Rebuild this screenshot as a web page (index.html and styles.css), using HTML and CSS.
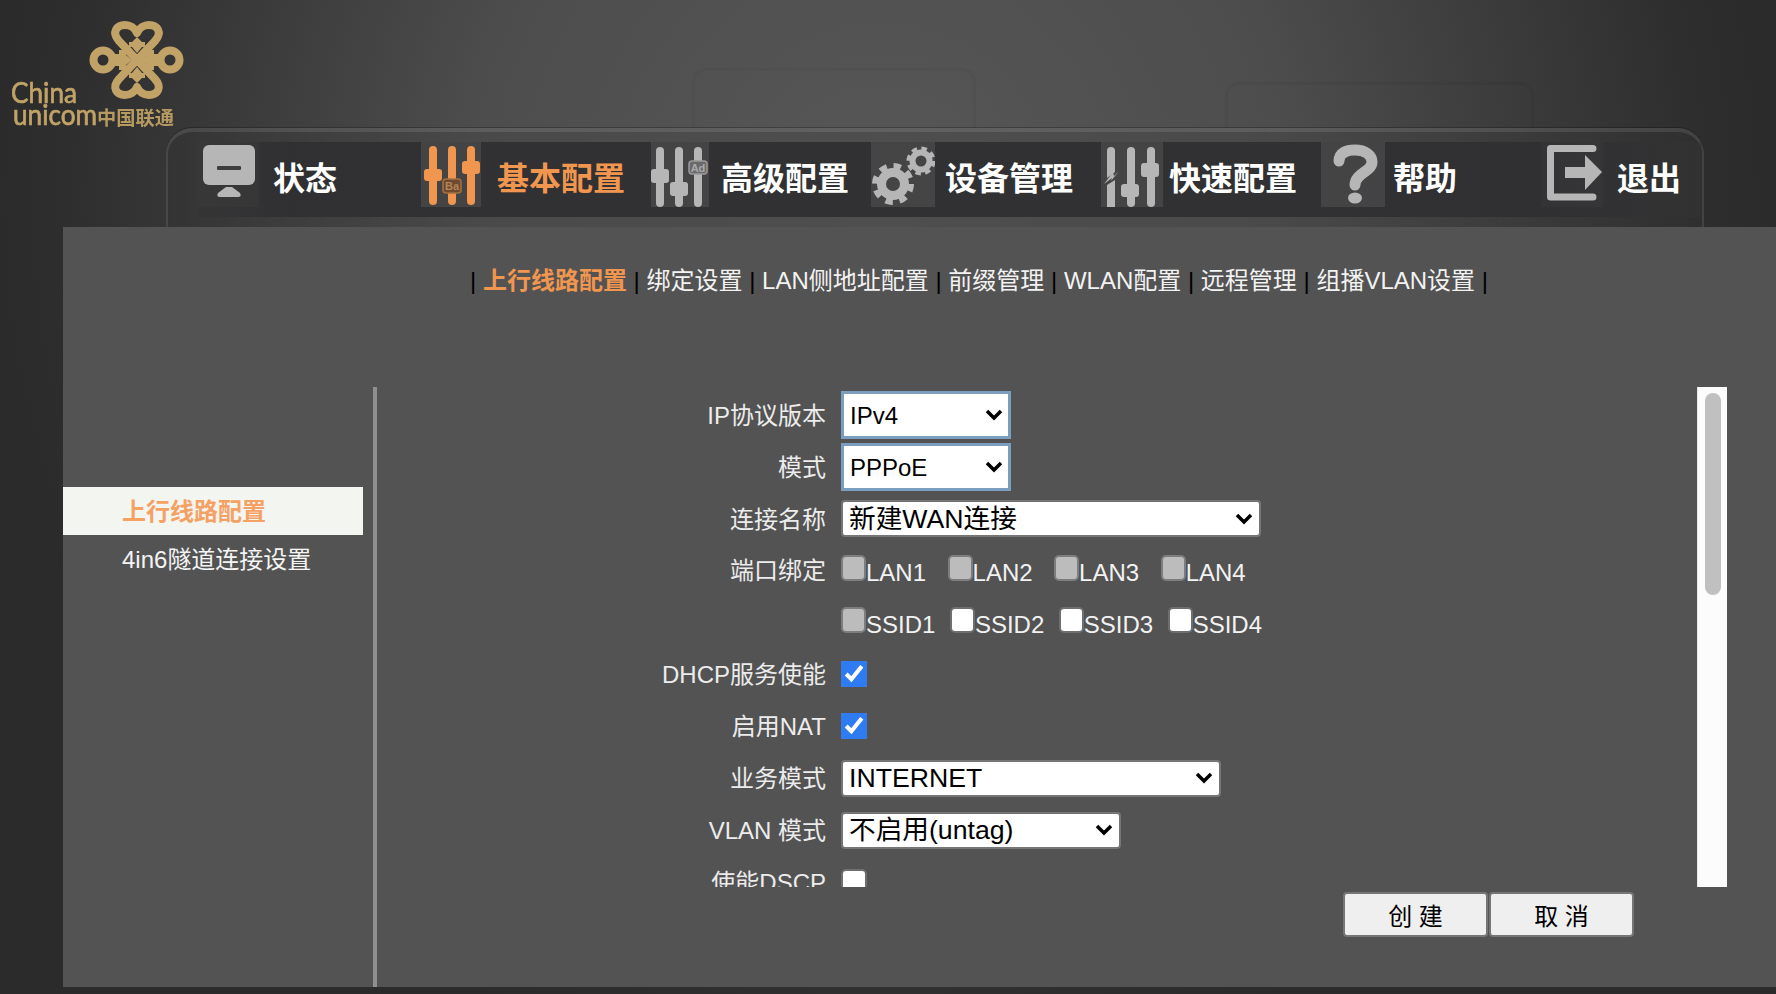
FILE: index.html
```html
<!DOCTYPE html>
<html lang="zh">
<head>
<meta charset="utf-8">
<title>China Unicom</title>
<link rel="stylesheet" href="styles.css">
</head>
<body>
<div class="ghost ghost-a"></div>
<div class="ghost ghost-b"></div>
<header class="brand">
  <svg class="logo" width="190" height="129" viewBox="0 0 190 129">
    <g class="knot">
      <path d="M137 60L119 41C111 32 117 25 125 25C130 25 135 28 137 33C139 28 144 25 149 25C157 25 163 32 155 41Z"/>
      <path d="M137 60L119 79C111 88 117 95 125 95C130 95 135 92 137 87C139 92 144 95 149 95C157 95 163 88 155 79Z"/>
      <circle cx="103" cy="60" r="9.500"/>
      <circle cx="170" cy="60" r="9.500"/>
    </g>
    <g class="knot-fill">
      <path d="M110 54h9v-4h7v5l6 5l-6 5v5h-7v-4h-9z"/>
      <path d="M163 54h-9v-4h-7v5l-6 5l6 5v5h7v-4h9z"/>
      <path d="M137 37l5 5h3v5h-3l-5 6l-5-6h-3v-5h3z"/>
      <path d="M137 83l5-5h3v-5h-3l-5-6l-5 6h-3v5h3z"/>
    </g>
    <text class="logo-en" x="11" y="103" textLength="66" lengthAdjust="spacingAndGlyphs">China</text>
    <text class="logo-en" x="13" y="125" textLength="84" lengthAdjust="spacingAndGlyphs">unicom</text>
    <text class="logo-cn" x="97" y="125" textLength="77" lengthAdjust="spacingAndGlyphs">中国联通</text>
  </svg>
</header>

<nav class="frame">
  <ul class="menu">
    <li class="item">
      <span class="tile tile-plain">
        <svg width="62" height="65" viewBox="0 0 62 65"><rect class="ico" x="6" y="3" width="52" height="40" rx="6"/><rect class="slot" x="20" y="24" width="24" height="4" rx="1"/><path class="ico" d="M29 45h6l8 6q2 4-2 4H23q-4 0-2-4z"/></svg>
      </span>
      <span class="label">状态</span>
    </li>
    <li class="item active">
      <span class="tile">
        <svg width="60" height="65" viewBox="0 0 60 65"><g class="ico"><rect x="8" y="4" width="8" height="59" rx="4"/><rect x="27" y="4" width="8" height="59" rx="4"/><rect x="46" y="4" width="8" height="59" rx="4"/><rect x="3" y="27" width="18" height="12" rx="3"/><rect x="41" y="19" width="18" height="13" rx="3"/></g><rect class="badge" x="22" y="37" width="18" height="14" rx="3"/><text class="badge-text" x="31" y="48">Ba</text></svg>
      </span>
      <span class="label">基本配置</span>
    </li>
    <li class="item">
      <span class="tile">
        <svg width="58" height="65" viewBox="0 0 58 65"><g class="ico"><rect x="5" y="5" width="8" height="60" rx="4"/><rect x="24" y="5" width="8" height="60" rx="4"/><rect x="43" y="5" width="8" height="60" rx="4"/><rect x="0" y="27" width="18" height="14" rx="3"/><rect x="19" y="40" width="18" height="14" rx="3"/></g><rect class="badge" x="38" y="19" width="18" height="13" rx="3"/><text class="badge-text" x="47" y="30">Ad</text></svg>
      </span>
      <span class="label">高级配置</span>
    </li>
    <li class="item">
      <span class="tile">
        <svg width="64" height="65" viewBox="0 0 64 65"><g class="gear"><circle class="gear-ring" cx="22" cy="42" r="11.5" stroke-width="9"/><circle class="gear-teeth" cx="22" cy="42" r="18" stroke-width="6"/><circle class="gear-ring" cx="50" cy="19" r="8.5" stroke-width="6"/><circle class="gear-teeth-s" cx="50" cy="19" r="12.5" stroke-width="4"/></g></svg>
      </span>
      <span class="label">设备管理</span>
    </li>
    <li class="item">
      <span class="tile">
        <svg width="62" height="65" viewBox="0 0 62 65"><g class="ico"><path d="M6 9a4 4 0 0 1 8 0v21l-8 6z"/><path d="M6 43l8-5v27H6z"/><path d="M3 42l9-12 1 4 5-5-8 10 1-3z"/><rect x="26" y="5" width="8" height="60" rx="4"/><rect x="46" y="5" width="8" height="60" rx="4"/><rect x="20" y="42" width="18" height="13" rx="3"/><rect x="40" y="21" width="18" height="14" rx="3"/></g></svg>
      </span>
      <span class="label">快速配置</span>
    </li>
    <li class="item">
      <span class="tile">
        <svg width="64" height="65" viewBox="0 0 64 65"><path class="q" d="M18 19C18 11 25 8 34 8C44 8 51 13 51 20C51 30 34 31 34 43"/><ellipse class="ico" cx="34" cy="56" rx="7" ry="5.5"/></svg>
      </span>
      <span class="label">帮助</span>
    </li>
    <li class="item">
      <span class="tile tile-plain">
        <svg width="62" height="65" viewBox="0 0 62 65"><path class="exit" d="M52 6.500H9.500V55H52"/><path class="ico" d="M24 25H44V13L61 30L44 48V36H24z"/></svg>
      </span>
      <span class="label">退出</span>
    </li>
  </ul>
</nav>

<main class="panel">
  <div class="subnav"><span class="sep">|</span> <a class="on">上行线路配置</a> <span class="sep">|</span> <a>绑定设置</a> <span class="sep">|</span> <a>LAN侧地址配置</a> <span class="sep">|</span> <a>前缀管理</a> <span class="sep">|</span> <a>WLAN配置</a> <span class="sep">|</span> <a>远程管理</a> <span class="sep">|</span> <a>组播VLAN设置</a> <span class="sep">|</span></div>
  <div class="work">
    <aside class="side">
      <div class="side-row current">上行线路配置</div>
      <div class="side-row">4in6隧道连接设置</div>
    </aside>
    <section class="content">
      <div class="pane">
        <form class="form">
          <div class="row"><label class="key">IP协议版本</label><span class="pick pick-proto"><select class="sel sel-blue"><option>IPv4</option></select><svg class="chev" width="18" height="12" viewBox="0 0 18 12"><path d="M2 2l7 7 7-7"/></svg></span></div>
          <div class="row"><label class="key">模式</label><span class="pick pick-proto"><select class="sel sel-blue"><option>PPPoE</option></select><svg class="chev" width="18" height="12" viewBox="0 0 18 12"><path d="M2 2l7 7 7-7"/></svg></span></div>
          <div class="row row-tight"><label class="key">连接名称</label><span class="pick pick-name"><select class="sel"><option>新建WAN连接</option></select><svg class="chev" width="18" height="12" viewBox="0 0 18 12"><path d="M2 2l7 7 7-7"/></svg></span></div>
          <div class="row"><label class="key">端口绑定</label>
            <div class="ports ports-lan">
              <label class="port"><input type="checkbox" class="cb off" disabled>LAN1</label>
              <label class="port"><input type="checkbox" class="cb off" disabled>LAN2</label>
              <label class="port"><input type="checkbox" class="cb off" disabled>LAN3</label>
              <label class="port"><input type="checkbox" class="cb off" disabled>LAN4</label>
            </div>
          </div>
          <div class="row"><span class="key"></span>
            <div class="ports ports-ssid">
              <label class="port"><input type="checkbox" class="cb off" disabled>SSID1</label>
              <label class="port"><input type="checkbox" class="cb empty">SSID2</label>
              <label class="port"><input type="checkbox" class="cb empty">SSID3</label>
              <label class="port"><input type="checkbox" class="cb empty">SSID4</label>
            </div>
          </div>
          <div class="row"><label class="key">DHCP服务使能</label><input type="checkbox" class="cb" checked></div>
          <div class="row"><label class="key">启用NAT</label><input type="checkbox" class="cb" checked></div>
          <div class="row"><label class="key">业务模式</label><span class="pick pick-mode"><select class="sel"><option>INTERNET</option></select><svg class="chev" width="18" height="12" viewBox="0 0 18 12"><path d="M2 2l7 7 7-7"/></svg></span></div>
          <div class="row"><label class="key">VLAN 模式</label><span class="pick pick-vlan"><select class="sel"><option>不启用(untag)</option></select><svg class="chev" width="18" height="12" viewBox="0 0 18 12"><path d="M2 2l7 7 7-7"/></svg></span></div>
          <div class="row"><label class="key">使能DSCP</label><input type="checkbox" class="cb empty"></div>
        </form>
        <div class="track"><div class="thumb"></div></div>
      </div>
      <div class="actions">
        <button type="button" class="btn">创 建</button>
        <button type="button" class="btn">取 消</button>
      </div>
    </section>
  </div>
</main>
</body>
</html>
```
FILE: styles.css
```css
* { box-sizing: border-box; }
html, body { margin: 0; height: 994px; overflow: hidden; }
body {
  position: relative;
  font-family: "Liberation Sans", "Noto Sans CJK SC", sans-serif;
  font-size: 24px;
  color: #f2f2f2;
  background: radial-gradient(ellipse 900px 900px at 880px 200px, #575757 0%, #4d4d4d 45%, #2d2d2d 92%, #2b2b2b 100%);
}

/* faint watermark shapes in the page backdrop */
.ghost {
  position: absolute;
  border: 3px solid rgba(0, 0, 0, .035);
  border-bottom: 0;
  border-radius: 14px 14px 0 0;
}
.ghost-a { left: 692px; top: 68px; width: 284px; height: 60px; }
.ghost-b { left: 1225px; top: 82px; width: 309px; height: 46px; }

/* logo */
.brand { height: 128px; }
.logo { display: block; filter: blur(.5px); }
.knot { fill: none; stroke: #c2a367; stroke-width: 8; stroke-linejoin: round; }
.knot-fill { fill: #c2a367; }
.logo-en { font-family: Lato, sans-serif; font-size: 29px; fill: #c2a367; stroke: #c2a367; stroke-width: .7px; }
.logo-cn { font-family: "Noto Sans CJK SC", sans-serif; font-size: 19px; font-weight: 700; fill: #b79a60; }

/* top menu */
.frame {
  position: relative;
  height: 99px;
  margin-left: 166px;
  width: 1538px;
  padding-top: 14px;
  background: linear-gradient(90deg, rgba(50, 50, 50, .4), rgba(70, 70, 70, .5) 20%, rgba(70, 70, 70, .5) 70%, rgba(50, 50, 50, .4));
  border: 2px solid rgba(255, 255, 255, .1);
  border-top: 4px solid rgba(255, 255, 255, .1);
  border-bottom: 0;
  border-radius: 26px 26px 0 0;
  box-shadow: 0 -1px 0 rgba(0, 0, 0, .25);
}
.menu {
  display: grid;
  grid-template-columns: 224px 230px 220px 230px 220px 220px 1fr;
  height: 75px;
  margin: -4px 0 0 29px;
  padding: 0;
  list-style: none;
  background: linear-gradient(90deg, rgba(52, 52, 54, .6), rgba(47, 47, 49, .92) 6%, rgba(47, 47, 49, .92) 90%, rgba(52, 52, 54, .5));
}
.item { display: flex; height: 65px; align-items: center; }
.tile { flex: none; height: 65px; background: rgba(100, 100, 100, .38); }
.tile svg { display: block; }
.tile-plain { background: rgba(100, 100, 100, .08); }
.label { padding-top: 8px; font-size: 32px; line-height: 40px; font-weight: 700; color: #fff; white-space: nowrap; }
.item:nth-child(1) .label { margin-left: 14px; }
.item:nth-child(2) .label { margin-left: 16px; }
.item:nth-child(3) .label { margin-left: 12px; }
.item:nth-child(4) .label { margin-left: 10px; }
.item:nth-child(5) .label { margin-left: 6px; }
.item:nth-child(6) .label { margin-left: 8px; }
.item:nth-child(7) .label { margin-left: 14px; }

.ico { fill: #b6b6b6; }
.slot { fill: #3d3d3d; }
.badge { fill: #6a6a6a; stroke: #9a9a9a; stroke-width: 1.500; }
.badge-text { fill: #aaa; font-size: 11px; font-weight: 700; text-anchor: middle; }
.gear { fill: none; stroke: #b6b6b6; }
.gear-teeth { stroke-dasharray: 7.400 6.737; }
.gear-teeth-s { stroke-dasharray: 5.500 4.318; }
.q { fill: none; stroke: #b6b6b6; stroke-width: 11; stroke-linecap: round; }
.exit { fill: none; stroke: #b6b6b6; stroke-width: 7; stroke-linecap: round; stroke-linejoin: round; }
.active .ico { fill: #f0964f; }
.active .badge { fill: #6d4a30; stroke: #a5703f; }
.active .badge-text { fill: #b58356; }
.active .label { color: #f0964f; }

/* content panel */
.panel { height: 760px; margin-left: 63px; background: #535353; }
.subnav {
  height: 160px;
  padding: 36px 0 0 407px;
  line-height: 36px;
  white-space: pre-wrap;
  color: #f2f2f2;
}
.sep { color: #000; }
.subnav .on { color: #f0964f; font-weight: 700; }
.work { display: flex; height: 600px; }
.side { flex: none; width: 310px; padding-top: 100px; }
.side-row { width: 300px; height: 48px; padding-left: 59px; line-height: 49px; color: #f4f4f4; }
.side-row.current { background: #f3f5f1; color: #f6a164; font-weight: 700; }
.content {
  flex: none;
  width: 1403px;
  border-left: 4px solid transparent;
  border-image: linear-gradient(90deg, #8f8f8f, #c8c8c8) 1;
}
.pane { display: flex; height: 500px; }
.form { flex: none; width: 1320px; height: 500px; padding-top: 2px; overflow: hidden; }
.row { display: grid; grid-template-columns: 449px 1fr; column-gap: 15px; height: 52px; align-items: center; justify-items: start; }
.row-tight { height: 51px; }
.key { justify-self: end; margin-bottom: 3px; white-space: nowrap; color: #ececec; }
.pick { position: relative; display: block; }
.pick-proto { width: 170px; }
.pick-name { width: 420px; }
.pick-mode { width: 380px; }
.pick-vlan { width: 280px; }
.chev { position: absolute; right: 8px; top: 50%; margin-top: -6px; fill: none; stroke: #000; stroke-width: 3.500; pointer-events: none; }
.sel {
  display: block;
  width: 100%;
  height: 37px;
  padding: 0 0 0 6px;
  appearance: none;
  font: 26.67px "Liberation Sans", "Noto Sans CJK SC", sans-serif;
  color: #000;
  background-color: #fff;
  border: 2px solid #767676;
  border-radius: 4px;
}
.sel-blue { height: 48px; padding-left: 6px; font-size: 24px; border: 3px solid #7b9ebf; border-radius: 0; }
.cb { display: inline-block; width: 26px; height: 26px; margin: 0; accent-color: #2e7bf2; }
.cb.off {
  appearance: none;
  width: 25px;
  background: #bcbcbc;
  border: 2px solid #7d7d7d;
  border-radius: 5px;
}
.cb.empty {
  appearance: none;
  background: #fff;
  border: 2px solid #6f6f6f;
  border-radius: 5px;
}
.ports .cb.empty { width: 25px; }
.ports { display: flex; padding-top: 2px; }
.port { display: block; white-space: nowrap; color: #f2f2f2; }
.ports-lan { gap: 21.500px; }
.ports-ssid { gap: 14.500px; }
.track { flex: none; width: 30px; height: 500px; padding: 6px 0 0 7px; background: #fcfcfc; border-left: 1px solid #e8e8e8; }
.thumb { width: 16px; height: 202px; background: #c0c0c0; border-radius: 8px; }
.actions { display: flex; gap: 1px; padding: 5px 0 0 966px; }
.btn {
  width: 145px;
  height: 45px;
  padding: 0;
  font: 24px "Liberation Sans", "Noto Sans CJK SC", sans-serif;
  color: #000;
  background: #efefef;
  border: 2px solid #767676;
  border-radius: 4px;
}
```
